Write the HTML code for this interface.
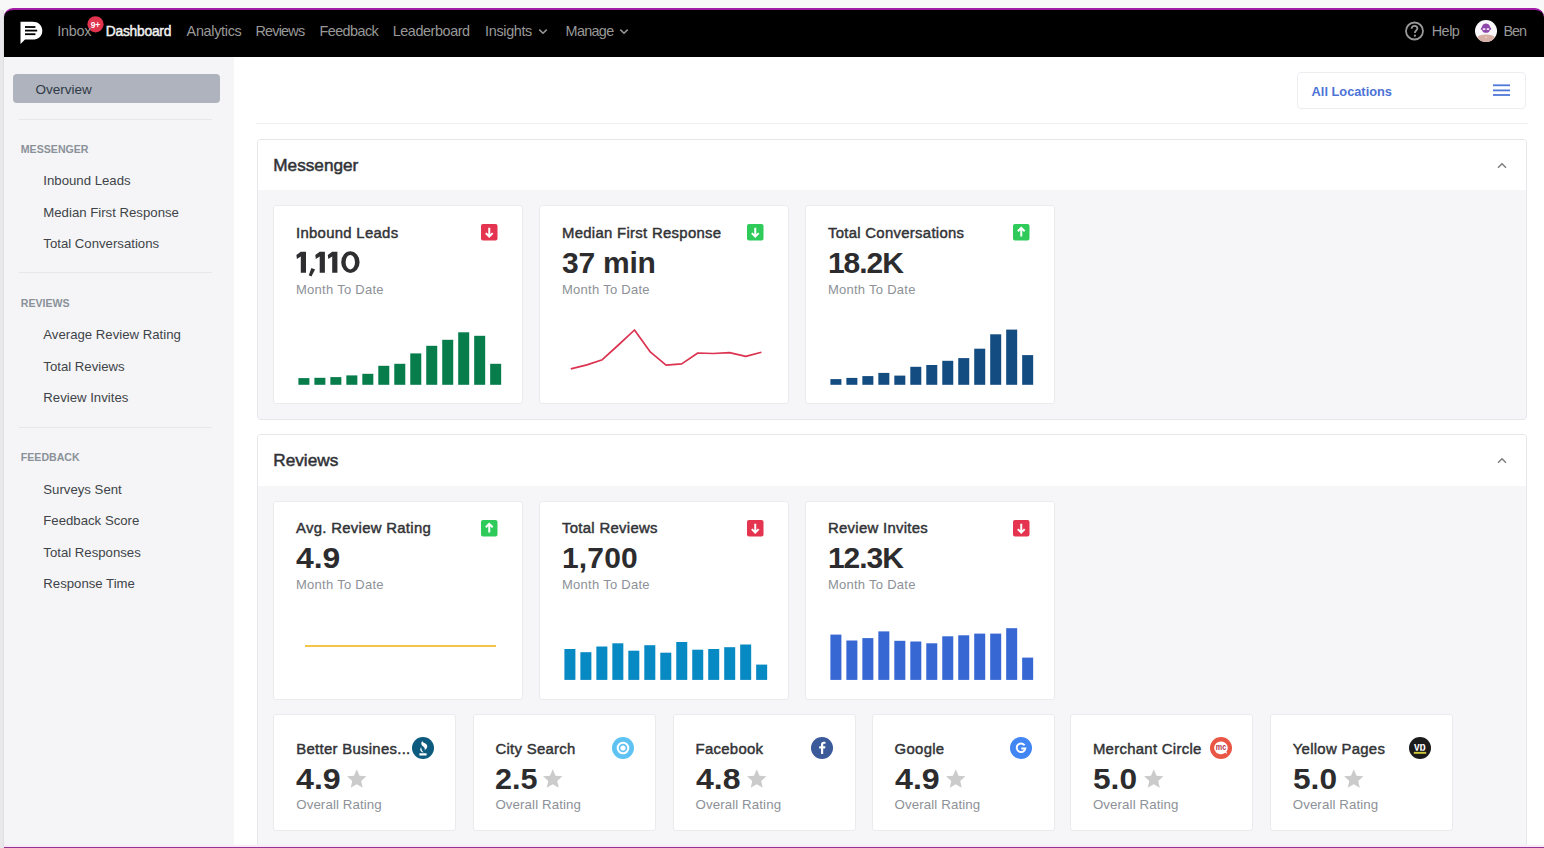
<!DOCTYPE html>
<html><head><meta charset="utf-8"><title>Dashboard</title>
<style>
*{margin:0;padding:0;box-sizing:border-box}
html,body{width:1544px;height:848px;overflow:hidden;background:#f8f8f8;font-family:"Liberation Sans",sans-serif}
.t{position:absolute;line-height:1;white-space:nowrap}
.a{position:absolute;display:block}
#app{position:absolute;left:4px;top:8px;width:1540px;height:840px;background:#fff;border-radius:8px 8px 0 0;overflow:hidden}
#purple{position:absolute;left:4px;top:8px;width:1540px;height:6px;background:#a01ea3;border-radius:8px 8px 0 0}
#nav{position:absolute;left:4px;top:8px;width:1540px;height:49px;background:#000;border-top:2px solid #a31ca6;border-radius:9px 9px 0 0}
#side{position:absolute;left:4px;top:57px;width:229.5px;height:791px;background:#f5f5f7}
#bottom{position:absolute;left:4px;top:845px;width:1540px;height:3px;background:linear-gradient(#fbe8fa 0,#fbe8fa 1.5px,#93358f 1.5px)}
.card{position:absolute;background:#fff;border:1px solid #ebebee;border-radius:3px}
.panel{position:absolute;background:#f6f6f8;border:1px solid #e6e7ea;border-radius:4px;overflow:hidden}
.ph{position:absolute;left:0;top:0;right:0;background:#fff}
.sep{position:absolute;height:1px;background:#e6e7ea}
</style></head><body>
<div id="app"></div>
<div class="a" style="left:0;top:10px;width:4px;height:838px;background:#e9e9eb"></div>
<div class="a" style="left:3px;top:10px;width:1px;height:838px;background:#dfdfe1"></div>
<div id="nav"></div>
<div id="side"></div>
<div class="a" style="left:13.2px;top:73.5px;width:206.8px;height:29.3px;background:#aeb3bd;border-radius:4px"></div>
<div class="sep" style="left:18.5px;top:118.5px;width:193.5px"></div>
<div class="sep" style="left:18.5px;top:272px;width:193.5px"></div>
<div class="sep" style="left:18.5px;top:426.5px;width:193.5px"></div>
<div class="a" style="left:1297px;top:72px;width:229px;height:37px;border:1px solid #edeef1;border-radius:4px;background:#fff"></div>
<svg class="a" style="left:1492px;top:83px" width="19" height="14"><rect x="1" y="1.4" width="17" height="1.8" fill="#5078d8"/><rect x="1" y="6.5" width="17" height="1.8" fill="#5078d8"/><rect x="1" y="11.1" width="17" height="1.8" fill="#5078d8"/></svg>
<div class="sep" style="left:256px;top:123px;width:1272px;background:#eeeff1"></div>
<div class="panel" style="left:257px;top:139px;width:1270px;height:281px"><div class="ph" style="height:50.4px"></div></div>
<div class="panel" style="left:257px;top:434px;width:1270px;height:430px"><div class="ph" style="height:51px"></div></div>
<svg class="a" style="left:1496px;top:161px" width="12" height="9"><path d="M2 6.8 L6 2.8 L10 6.8" fill="none" stroke="#7a7a7a" stroke-width="1.4"/></svg>
<svg class="a" style="left:1496px;top:456px" width="12" height="9"><path d="M2 6.8 L6 2.8 L10 6.8" fill="none" stroke="#7a7a7a" stroke-width="1.4"/></svg>
<div id="bottom"></div>
<!-- logo -->
<svg class="a" style="left:20px;top:21px" width="24" height="24" viewBox="0 0 24 24"><path d="M0.5 0.8 H12.5 C18.3 0.8 22.3 4.2 22.3 9.7 C22.3 15.2 18.3 18.6 12.5 18.6 H5 L0.5 23 Z" fill="#fff"/><rect x="5" y="5.1" width="10.4" height="1.8" fill="#000"/><rect x="5" y="8.7" width="12.2" height="1.8" fill="#000"/><rect x="5" y="12.3" width="10.4" height="1.8" fill="#000"/></svg>
<!-- badge -->
<svg class="a" style="left:87px;top:16px" width="17" height="17" viewBox="0 0 17 17"><circle cx="8.5" cy="8.3" r="8.1" fill="#e0344f"/><text x="8.5" y="11.6" font-family="Liberation Sans" font-size="9.2" font-weight="700" fill="#fff" text-anchor="middle" textLength="9.6" lengthAdjust="spacingAndGlyphs">9+</text></svg>
<!-- help -->
<svg class="a" style="left:1404px;top:21px" width="21" height="21" viewBox="0 0 21 21"><circle cx="10.5" cy="10" r="8.5" fill="none" stroke="#999999" stroke-width="1.8"/><path d="M7.6 7.7 C7.6 5.9 8.9 4.9 10.5 4.9 C12.1 4.9 13.4 5.9 13.4 7.5 C13.4 9.4 10.9 9.6 10.9 11.7 V12.1" fill="none" stroke="#999999" stroke-width="1.8"/><circle cx="10.9" cy="14.7" r="1.1" fill="#999999"/></svg>
<!-- avatar -->
<svg class="a" style="left:1475px;top:20px" width="22" height="22" viewBox="0 0 22 22"><defs><clipPath id="av"><circle cx="11" cy="11" r="11"/></clipPath></defs><circle cx="11" cy="11" r="11" fill="#fbf8fb"/><g clip-path="url(#av)"><path d="M2 23 V17.5 C3.5 15.5 6.5 14.6 11 14.6 C15.5 14.6 18.5 15.5 20 17.5 V23 Z" fill="#d6b0a6"/><path d="M7.2 6.2 C7.6 4.3 9.2 3.4 11 3.4 C12.8 3.4 14.4 4.3 14.8 6.2 L16.4 9.2 L14.8 10.2 C14.5 12 13 12.8 11 12.8 C9 12.8 7.5 12 7.2 10.2 L5.6 9.2 Z" fill="#8d47ab"/><rect x="7.8" y="8.2" width="2.5" height="1.9" fill="#efdcf5"/><rect x="11.7" y="8.2" width="2.5" height="1.9" fill="#efdcf5"/><rect x="10.2" y="16.6" width="1.6" height="1.4" fill="#f0d6b0"/></g></svg>
<div class="t" style="left:57.20px;top:24.21px;font-size:14.4px;font-weight:400;color:#999999;letter-spacing:-0.25px;">Inbox</div>
<div class="t" style="left:105.80px;top:24.72px;font-size:13.8px;font-weight:400;color:#f2f2f2;letter-spacing:-0.24px;-webkit-text-stroke:0.45px #f2f2f2">Dashboard</div>
<div class="t" style="left:186.60px;top:24.21px;font-size:14.4px;font-weight:400;color:#999999;letter-spacing:-0.3px;">Analytics</div>
<div class="t" style="left:255.50px;top:24.21px;font-size:14.4px;font-weight:400;color:#999999;letter-spacing:-0.8px;">Reviews</div>
<div class="t" style="left:319.50px;top:24.21px;font-size:14.4px;font-weight:400;color:#999999;letter-spacing:-0.56px;">Feedback</div>
<div class="t" style="left:392.70px;top:24.21px;font-size:14.4px;font-weight:400;color:#999999;letter-spacing:-0.42px;">Leaderboard</div>
<div class="t" style="left:485.10px;top:24.21px;font-size:14.4px;font-weight:400;color:#999999;letter-spacing:-0.34px;">Insights</div>
<div class="t" style="left:565.60px;top:24.21px;font-size:14.4px;font-weight:400;color:#999999;letter-spacing:-0.68px;">Manage</div>
<svg class="a" style="left:537.7px;top:27.5px" width="10" height="8" viewBox="0 0 10 8"><path d="M1.3 1.6 L5 5.3 L8.7 1.6" fill="none" stroke="#999999" stroke-width="1.5"/></svg>
<svg class="a" style="left:618.7px;top:27.5px" width="10" height="8" viewBox="0 0 10 8"><path d="M1.3 1.6 L5 5.3 L8.7 1.6" fill="none" stroke="#999999" stroke-width="1.5"/></svg>
<div class="t" style="left:1431.70px;top:24.21px;font-size:14.4px;font-weight:400;color:#999999;letter-spacing:-0.47px;">Help</div>
<div class="t" style="left:1503.50px;top:24.21px;font-size:14.4px;font-weight:400;color:#999999;letter-spacing:-1.05px;">Ben</div>
<div class="t" style="left:35.60px;top:82.57px;font-size:13.5px;font-weight:400;color:#313a47;">Overview</div>
<div class="t" style="left:20.80px;top:143.83px;font-size:10.6px;font-weight:700;color:#8a9199;">MESSENGER</div>
<div class="t" style="left:43.30px;top:174.13px;font-size:13.2px;font-weight:400;color:#404449;">Inbound Leads</div>
<div class="t" style="left:43.30px;top:205.73px;font-size:13.2px;font-weight:400;color:#404449;">Median First Response</div>
<div class="t" style="left:43.30px;top:237.13px;font-size:13.2px;font-weight:400;color:#404449;">Total Conversations</div>
<div class="t" style="left:20.80px;top:298.03px;font-size:10.6px;font-weight:700;color:#8a9199;">REVIEWS</div>
<div class="t" style="left:43.30px;top:328.33px;font-size:13.2px;font-weight:400;color:#404449;">Average Review Rating</div>
<div class="t" style="left:43.30px;top:359.93px;font-size:13.2px;font-weight:400;color:#404449;">Total Reviews</div>
<div class="t" style="left:43.30px;top:391.33px;font-size:13.2px;font-weight:400;color:#404449;">Review Invites</div>
<div class="t" style="left:20.80px;top:452.23px;font-size:10.6px;font-weight:700;color:#8a9199;">FEEDBACK</div>
<div class="t" style="left:43.30px;top:482.53px;font-size:13.2px;font-weight:400;color:#404449;">Surveys Sent</div>
<div class="t" style="left:43.30px;top:514.13px;font-size:13.2px;font-weight:400;color:#404449;">Feedback Score</div>
<div class="t" style="left:43.30px;top:545.53px;font-size:13.2px;font-weight:400;color:#404449;">Total Responses</div>
<div class="t" style="left:43.30px;top:576.93px;font-size:13.2px;font-weight:400;color:#404449;">Response Time</div>
<div class="t" style="left:1311.60px;top:85.56px;font-size:12.8px;font-weight:700;color:#4c73d5;">All Locations</div>
<div class="t" style="left:273.30px;top:156.54px;font-size:17.2px;font-weight:400;color:#303236;-webkit-text-stroke:0.5px #303236">Messenger</div>
<div class="t" style="left:273.30px;top:452.14px;font-size:17.2px;font-weight:400;color:#303236;-webkit-text-stroke:0.5px #303236">Reviews</div>
<div class="card" style="left:273px;top:205px;width:250px;height:199px"></div>
<div class="t" style="left:296.00px;top:226.39px;font-size:14.9px;font-weight:400;color:#323336;-webkit-text-stroke:0.45px #323336;letter-spacing:0.3px">Inbound Leads</div>
<svg class="a" style="left:290px;top:245px" width="75" height="35" viewBox="0 0 75 35"><g fill="#2e2e30"><polygon points="6.4,10.1 10.8,6.8 16.0,6.8 16.0,27.8 10.8,27.8 10.8,11.4 6.9,14.0"/><polygon points="21.4,23.1 25.1,24.4 21.4,31.4 18.8,30.3"/><polygon points="25.3,10.1 29.7,6.8 34.9,6.8 34.9,27.8 29.7,27.8 29.7,11.4 25.8,14.0"/><polygon points="37.8,10.1 42.2,6.8 47.4,6.8 47.4,27.8 42.2,27.8 42.2,11.4 38.3,14.0"/><path fill-rule="evenodd" d="M350.4 251.3 A9.2 10.85 0 1 0 350.4 273 A9.2 10.85 0 1 0 350.4 251.3 Z M350.3 254.9 A4.7 7.25 0 1 1 350.3 269.4 A4.7 7.25 0 1 1 350.3 254.9 Z" transform="translate(-290 -245)"/></g></svg>
<div class="t" style="left:296.00px;top:282.90px;font-size:13px;font-weight:400;color:#8d9197;letter-spacing:0.27px">Month To Date</div>
<svg class="a" style="left:481.3px;top:224px" width="16.5" height="16.5" viewBox="0 0 16.5 16.5"><rect width="16.5" height="16.5" rx="2" fill="#e5344f"/><path d="M8.25 3.8 V12.6 M4.8 9.1 L8.25 12.6 L11.7 9.1" fill="none" stroke="#fff" stroke-width="2"/></svg>
<svg class="a" style="left:274px;top:206px" width="249" height="197"><rect x="24.4" y="172.1" width="11" height="6.7" fill="#077d4c"/><rect x="40.379999999999995" y="171.8" width="11" height="7.0" fill="#077d4c"/><rect x="56.36" y="171.1" width="11" height="7.7" fill="#077d4c"/><rect x="72.34" y="169.4" width="11" height="9.4" fill="#077d4c"/><rect x="88.32" y="167.8" width="11" height="11.0" fill="#077d4c"/><rect x="104.30000000000001" y="159.8" width="11" height="19.0" fill="#077d4c"/><rect x="120.28" y="157.8" width="11" height="21.0" fill="#077d4c"/><rect x="136.26" y="147.4" width="11" height="31.4" fill="#077d4c"/><rect x="152.24" y="139.8" width="11" height="39.0" fill="#077d4c"/><rect x="168.22" y="133.8" width="11" height="45.0" fill="#077d4c"/><rect x="184.20000000000002" y="126.3" width="11" height="52.5" fill="#077d4c"/><rect x="200.18" y="129.8" width="11" height="49.0" fill="#077d4c"/><rect x="216.16" y="157.8" width="11" height="21.0" fill="#077d4c"/></svg>
<div class="card" style="left:539px;top:205px;width:250px;height:199px"></div>
<div class="t" style="left:562.00px;top:226.39px;font-size:14.9px;font-weight:400;color:#323336;-webkit-text-stroke:0.45px #323336;letter-spacing:0.3px">Median First Response</div>
<div class="t" style="left:562.00px;top:247.80px;font-size:30px;font-weight:700;color:#2c2c2e;letter-spacing:-0.25px">37 min</div>
<div class="t" style="left:562.00px;top:282.90px;font-size:13px;font-weight:400;color:#8d9197;letter-spacing:0.27px">Month To Date</div>
<svg class="a" style="left:747.3px;top:224px" width="16.5" height="16.5" viewBox="0 0 16.5 16.5"><rect width="16.5" height="16.5" rx="2" fill="#2ecb5b"/><path d="M8.25 3.8 V12.6 M4.8 9.1 L8.25 12.6 L11.7 9.1" fill="none" stroke="#fff" stroke-width="2"/></svg>
<svg class="a" style="left:540px;top:206px" width="249" height="197"><polyline points="30.8,162.8 46.9,158.9 62.3,153.7 78.4,139.0 94.5,124.0 110.5,146.2 126.1,159.1 141.7,157.9 157.8,147.0 173.2,147.5 189.5,146.7 205.8,150.4 221.4,146.2" fill="none" stroke="#db3350" stroke-width="1.7" stroke-linejoin="round"/></svg>
<div class="card" style="left:805px;top:205px;width:250px;height:199px"></div>
<div class="t" style="left:827.90px;top:226.39px;font-size:14.9px;font-weight:400;color:#323336;-webkit-text-stroke:0.45px #323336;letter-spacing:0.3px">Total Conversations</div>
<div class="t" style="left:827.90px;top:247.80px;font-size:30px;font-weight:700;color:#2c2c2e;letter-spacing:-1.0px">18.2K</div>
<div class="t" style="left:827.90px;top:282.90px;font-size:13px;font-weight:400;color:#8d9197;letter-spacing:0.27px">Month To Date</div>
<svg class="a" style="left:1013.2px;top:224px" width="16.5" height="16.5" viewBox="0 0 16.5 16.5"><rect width="16.5" height="16.5" rx="2" fill="#2ecb5b"/><path d="M8.25 3.8 V12.6 M4.8 7.3 L8.25 3.8 L11.7 7.3" fill="none" stroke="#fff" stroke-width="2"/></svg>
<svg class="a" style="left:805.9px;top:206px" width="249" height="197"><rect x="24.4" y="173.1" width="11" height="5.7" fill="#134c80"/><rect x="40.379999999999995" y="171.9" width="11" height="6.9" fill="#134c80"/><rect x="56.36" y="170.1" width="11" height="8.7" fill="#134c80"/><rect x="72.34" y="166.9" width="11" height="11.9" fill="#134c80"/><rect x="88.32" y="169.6" width="11" height="9.2" fill="#134c80"/><rect x="104.30000000000001" y="160.8" width="11" height="18.0" fill="#134c80"/><rect x="120.28" y="159.0" width="11" height="19.8" fill="#134c80"/><rect x="136.26" y="154.8" width="11" height="24.0" fill="#134c80"/><rect x="152.24" y="152.1" width="11" height="26.7" fill="#134c80"/><rect x="168.22" y="142.7" width="11" height="36.1" fill="#134c80"/><rect x="184.20000000000002" y="128.3" width="11" height="50.5" fill="#134c80"/><rect x="200.18" y="123.6" width="11" height="55.2" fill="#134c80"/><rect x="216.16" y="149.1" width="11" height="29.7" fill="#134c80"/></svg>
<div class="card" style="left:273px;top:501px;width:250px;height:199px"></div>
<div class="t" style="left:296.00px;top:520.59px;font-size:14.9px;font-weight:400;color:#323336;-webkit-text-stroke:0.45px #323336;letter-spacing:0.3px">Avg. Review Rating</div>
<div class="t" style="left:296.00px;top:542.61px;font-size:30px;font-weight:700;color:#2c2c2e;transform:scaleX(1.062);transform-origin:0 0">4.9</div>
<div class="t" style="left:296.00px;top:577.80px;font-size:13px;font-weight:400;color:#8d9197;letter-spacing:0.27px">Month To Date</div>
<svg class="a" style="left:481.3px;top:520px" width="16.5" height="16.5" viewBox="0 0 16.5 16.5"><rect width="16.5" height="16.5" rx="2" fill="#2ecb5b"/><path d="M8.25 3.8 V12.6 M4.8 7.3 L8.25 3.8 L11.7 7.3" fill="none" stroke="#fff" stroke-width="2"/></svg>
<div class="a" style="left:304.6px;top:644.5px;width:191.8px;height:2px;background:#f3c34a"></div>
<div class="card" style="left:539px;top:501px;width:250px;height:199px"></div>
<div class="t" style="left:562.00px;top:520.59px;font-size:14.9px;font-weight:400;color:#323336;-webkit-text-stroke:0.45px #323336;letter-spacing:0.3px">Total Reviews</div>
<div class="t" style="left:562.00px;top:542.61px;font-size:30px;font-weight:700;color:#2c2c2e;letter-spacing:0.15px">1,700</div>
<div class="t" style="left:562.00px;top:577.80px;font-size:13px;font-weight:400;color:#8d9197;letter-spacing:0.27px">Month To Date</div>
<svg class="a" style="left:747.3px;top:520px" width="16.5" height="16.5" viewBox="0 0 16.5 16.5"><rect width="16.5" height="16.5" rx="2" fill="#e5344f"/><path d="M8.25 3.8 V12.6 M4.8 9.1 L8.25 12.6 L11.7 9.1" fill="none" stroke="#fff" stroke-width="2"/></svg>
<svg class="a" style="left:540px;top:502px" width="249" height="197"><rect x="24.4" y="147.0" width="11" height="30.9" fill="#0789c3"/><rect x="40.379999999999995" y="150.2" width="11" height="27.7" fill="#0789c3"/><rect x="56.36" y="144.5" width="11" height="33.4" fill="#0789c3"/><rect x="72.34" y="141.3" width="11" height="36.6" fill="#0789c3"/><rect x="88.32" y="148.7" width="11" height="29.2" fill="#0789c3"/><rect x="104.30000000000001" y="143.2" width="11" height="34.7" fill="#0789c3"/><rect x="120.28" y="150.7" width="11" height="27.2" fill="#0789c3"/><rect x="136.26" y="140.0" width="11" height="37.9" fill="#0789c3"/><rect x="152.24" y="147.7" width="11" height="30.2" fill="#0789c3"/><rect x="168.22" y="147.0" width="11" height="30.9" fill="#0789c3"/><rect x="184.20000000000002" y="145.2" width="11" height="32.7" fill="#0789c3"/><rect x="200.18" y="142.5" width="11" height="35.4" fill="#0789c3"/><rect x="216.16" y="162.6" width="11" height="15.3" fill="#0789c3"/></svg>
<div class="card" style="left:805px;top:501px;width:250px;height:199px"></div>
<div class="t" style="left:827.90px;top:520.59px;font-size:14.9px;font-weight:400;color:#323336;-webkit-text-stroke:0.45px #323336;letter-spacing:0.3px">Review Invites</div>
<div class="t" style="left:827.90px;top:542.61px;font-size:30px;font-weight:700;color:#2c2c2e;letter-spacing:-1.0px">12.3K</div>
<div class="t" style="left:827.90px;top:577.80px;font-size:13px;font-weight:400;color:#8d9197;letter-spacing:0.27px">Month To Date</div>
<svg class="a" style="left:1013.2px;top:520px" width="16.5" height="16.5" viewBox="0 0 16.5 16.5"><rect width="16.5" height="16.5" rx="2" fill="#e5344f"/><path d="M8.25 3.8 V12.6 M4.8 9.1 L8.25 12.6 L11.7 9.1" fill="none" stroke="#fff" stroke-width="2"/></svg>
<svg class="a" style="left:805.9px;top:502px" width="249" height="197"><rect x="24.4" y="132.6" width="11" height="45.3" fill="#3667d3"/><rect x="40.379999999999995" y="138.5" width="11" height="39.4" fill="#3667d3"/><rect x="56.36" y="136.1" width="11" height="41.8" fill="#3667d3"/><rect x="72.34" y="129.4" width="11" height="48.5" fill="#3667d3"/><rect x="88.32" y="138.8" width="11" height="39.1" fill="#3667d3"/><rect x="104.30000000000001" y="139.5" width="11" height="38.4" fill="#3667d3"/><rect x="120.28" y="141.3" width="11" height="36.6" fill="#3667d3"/><rect x="136.26" y="134.3" width="11" height="43.6" fill="#3667d3"/><rect x="152.24" y="133.3" width="11" height="44.6" fill="#3667d3"/><rect x="168.22" y="131.6" width="11" height="46.3" fill="#3667d3"/><rect x="184.20000000000002" y="131.6" width="11" height="46.3" fill="#3667d3"/><rect x="200.18" y="126.2" width="11" height="51.7" fill="#3667d3"/><rect x="216.16" y="155.6" width="11" height="22.3" fill="#3667d3"/></svg>
<div class="card" style="left:273px;top:714px;width:183px;height:117px"></div>
<div class="t" style="left:296.20px;top:741.69px;font-size:14.9px;font-weight:400;color:#323336;-webkit-text-stroke:0.45px #323336;letter-spacing:0.3px">Better Busines...</div>
<div class="t" style="left:296.20px;top:763.50px;font-size:30px;font-weight:700;color:#2c2c2e;transform:scaleX(1.072);transform-origin:0 0">4.9</div>
<div class="t" style="left:296.20px;top:797.84px;font-size:13.3px;font-weight:400;color:#8d9197;letter-spacing:0.1px">Overall Rating</div>
<svg class="a" style="left:345.73px;top:767.6px" width="21.5" height="21.5" viewBox="0 0 24 24"><path d="M12 1.5 L15.1 8.6 L22.8 9.3 L17 14.4 L18.7 22 L12 18 L5.3 22 L7 14.4 L1.2 9.3 L8.9 8.6 Z" fill="#cbcbcb"/></svg>
<svg class="a" style="left:412.2px;top:737.3px" width="22" height="22" viewBox="0 0 22 22"><circle cx="11" cy="11" r="11" fill="#0c5b7f"/><path d="M10.2 3.9 C8.6 6 9.2 8 11.3 9.6 C12.8 10.8 13.1 11.9 12.6 13.2 C15.4 11.8 16.1 9.1 14.1 7.1 C12.5 5.6 10.9 5.6 10.2 3.9 Z M9.2 10.2 C7.4 12.3 8.2 14.8 11.6 15.4 C10.1 14 9.4 12.4 9.2 10.2 Z M7.4 16.2 H14.6 V18.5 H7.4 Z" fill="#fff"/></svg>
<div class="card" style="left:473px;top:714px;width:183px;height:117px"></div>
<div class="t" style="left:495.40px;top:741.69px;font-size:14.9px;font-weight:400;color:#323336;-webkit-text-stroke:0.45px #323336;letter-spacing:0.3px">City Search</div>
<div class="t" style="left:495.40px;top:763.50px;font-size:30px;font-weight:700;color:#2c2c2e;transform:scaleX(1.02);transform-origin:0 0">2.5</div>
<div class="t" style="left:495.40px;top:797.84px;font-size:13.3px;font-weight:400;color:#8d9197;letter-spacing:0.1px">Overall Rating</div>
<svg class="a" style="left:542.23px;top:767.6px" width="21.5" height="21.5" viewBox="0 0 24 24"><path d="M12 1.5 L15.1 8.6 L22.8 9.3 L17 14.4 L18.7 22 L12 18 L5.3 22 L7 14.4 L1.2 9.3 L8.9 8.6 Z" fill="#cbcbcb"/></svg>
<svg class="a" style="left:611.9px;top:737.3px" width="22" height="22" viewBox="0 0 22 22"><circle cx="11" cy="11" r="11" fill="#5ec3f2"/><circle cx="11" cy="11" r="5.3" fill="none" stroke="#fff" stroke-width="2"/><circle cx="11" cy="11" r="2.6" fill="#fff"/></svg>
<div class="card" style="left:673px;top:714px;width:183px;height:117px"></div>
<div class="t" style="left:695.50px;top:741.69px;font-size:14.9px;font-weight:400;color:#323336;-webkit-text-stroke:0.45px #323336;letter-spacing:0.3px">Facebook</div>
<div class="t" style="left:695.50px;top:763.50px;font-size:30px;font-weight:700;color:#2c2c2e;transform:scaleX(1.065);transform-origin:0 0">4.8</div>
<div class="t" style="left:695.50px;top:797.84px;font-size:13.3px;font-weight:400;color:#8d9197;letter-spacing:0.1px">Overall Rating</div>
<svg class="a" style="left:745.73px;top:767.6px" width="21.5" height="21.5" viewBox="0 0 24 24"><path d="M12 1.5 L15.1 8.6 L22.8 9.3 L17 14.4 L18.7 22 L12 18 L5.3 22 L7 14.4 L1.2 9.3 L8.9 8.6 Z" fill="#cbcbcb"/></svg>
<svg class="a" style="left:810.6px;top:737.3px" width="22" height="22" viewBox="0 0 22 22"><circle cx="11" cy="11" r="11" fill="#3b5a9a"/><path d="M12.2 16.9 V11.4 H14.1 L14.4 9.2 H12.2 V7.9 C12.2 7.2 12.4 6.8 13.3 6.8 H14.5 V4.9 C14.2 4.85 13.6 4.8 12.8 4.8 C11.1 4.8 10 5.8 10 7.6 V9.2 H8.2 V11.4 H10 V16.9 Z" fill="#fff"/></svg>
<div class="card" style="left:872px;top:714px;width:183px;height:117px"></div>
<div class="t" style="left:894.60px;top:741.69px;font-size:14.9px;font-weight:400;color:#323336;-webkit-text-stroke:0.45px #323336;letter-spacing:0.3px">Google</div>
<div class="t" style="left:894.60px;top:763.50px;font-size:30px;font-weight:700;color:#2c2c2e;transform:scaleX(1.072);transform-origin:0 0">4.9</div>
<div class="t" style="left:894.60px;top:797.84px;font-size:13.3px;font-weight:400;color:#8d9197;letter-spacing:0.1px">Overall Rating</div>
<svg class="a" style="left:944.93px;top:767.6px" width="21.5" height="21.5" viewBox="0 0 24 24"><path d="M12 1.5 L15.1 8.6 L22.8 9.3 L17 14.4 L18.7 22 L12 18 L5.3 22 L7 14.4 L1.2 9.3 L8.9 8.6 Z" fill="#cbcbcb"/></svg>
<svg class="a" style="left:1009.9999999999999px;top:737.3px" width="22" height="22" viewBox="0 0 22 22"><circle cx="11" cy="11" r="11" fill="#4286f3"/><path d="M14.6 8.3 A4.3 4.3 0 1 0 15.3 11.5 H11.3" fill="none" stroke="#fff" stroke-width="1.9"/></svg>
<div class="card" style="left:1070px;top:714px;width:183px;height:117px"></div>
<div class="t" style="left:1092.90px;top:741.69px;font-size:14.9px;font-weight:400;color:#323336;-webkit-text-stroke:0.45px #323336;letter-spacing:0.3px">Merchant Circle</div>
<div class="t" style="left:1092.90px;top:763.50px;font-size:30px;font-weight:700;color:#2c2c2e;transform:scaleX(1.055);transform-origin:0 0">5.0</div>
<div class="t" style="left:1092.90px;top:797.84px;font-size:13.3px;font-weight:400;color:#8d9197;letter-spacing:0.1px">Overall Rating</div>
<svg class="a" style="left:1142.73px;top:767.6px" width="21.5" height="21.5" viewBox="0 0 24 24"><path d="M12 1.5 L15.1 8.6 L22.8 9.3 L17 14.4 L18.7 22 L12 18 L5.3 22 L7 14.4 L1.2 9.3 L8.9 8.6 Z" fill="#cbcbcb"/></svg>
<svg class="a" style="left:1209.8000000000002px;top:737.3px" width="22" height="22" viewBox="0 0 22 22"><circle cx="11" cy="11" r="11" fill="#ea5646"/><path d="M11 4.6 A6.9 6.3 0 1 0 15.4 15.8 L17.2 17 L16.4 14.6 A6.9 6.3 0 0 0 11 4.6 Z" fill="#fff"/><text x="11" y="13" font-family="Liberation Sans" font-size="8.6" font-weight="700" fill="#b8344a" text-anchor="middle" textLength="10.4" lengthAdjust="spacingAndGlyphs">mc</text></svg>
<div class="card" style="left:1270px;top:714px;width:183px;height:117px"></div>
<div class="t" style="left:1292.70px;top:741.69px;font-size:14.9px;font-weight:400;color:#323336;-webkit-text-stroke:0.45px #323336;letter-spacing:0.3px">Yellow Pages</div>
<div class="t" style="left:1292.70px;top:763.50px;font-size:30px;font-weight:700;color:#2c2c2e;transform:scaleX(1.055);transform-origin:0 0">5.0</div>
<div class="t" style="left:1292.70px;top:797.84px;font-size:13.3px;font-weight:400;color:#8d9197;letter-spacing:0.1px">Overall Rating</div>
<svg class="a" style="left:1342.53px;top:767.6px" width="21.5" height="21.5" viewBox="0 0 24 24"><path d="M12 1.5 L15.1 8.6 L22.8 9.3 L17 14.4 L18.7 22 L12 18 L5.3 22 L7 14.4 L1.2 9.3 L8.9 8.6 Z" fill="#cbcbcb"/></svg>
<svg class="a" style="left:1408.7px;top:737.3px" width="22" height="22" viewBox="0 0 22 22"><defs><clipPath id="ypc"><rect x="0" y="0" width="22" height="13.8"/></clipPath></defs><circle cx="11" cy="11" r="11" fill="#1b1b1b"/><text x="4.9" y="13.6" clip-path="url(#ypc)" font-family="Liberation Sans" font-size="12.5" font-weight="700" fill="#fff" textLength="11.8" lengthAdjust="spacingAndGlyphs">yp</text><rect x="4.8" y="14.9" width="12.4" height="1.9" fill="#cfc93a"/></svg>

</body></html>
